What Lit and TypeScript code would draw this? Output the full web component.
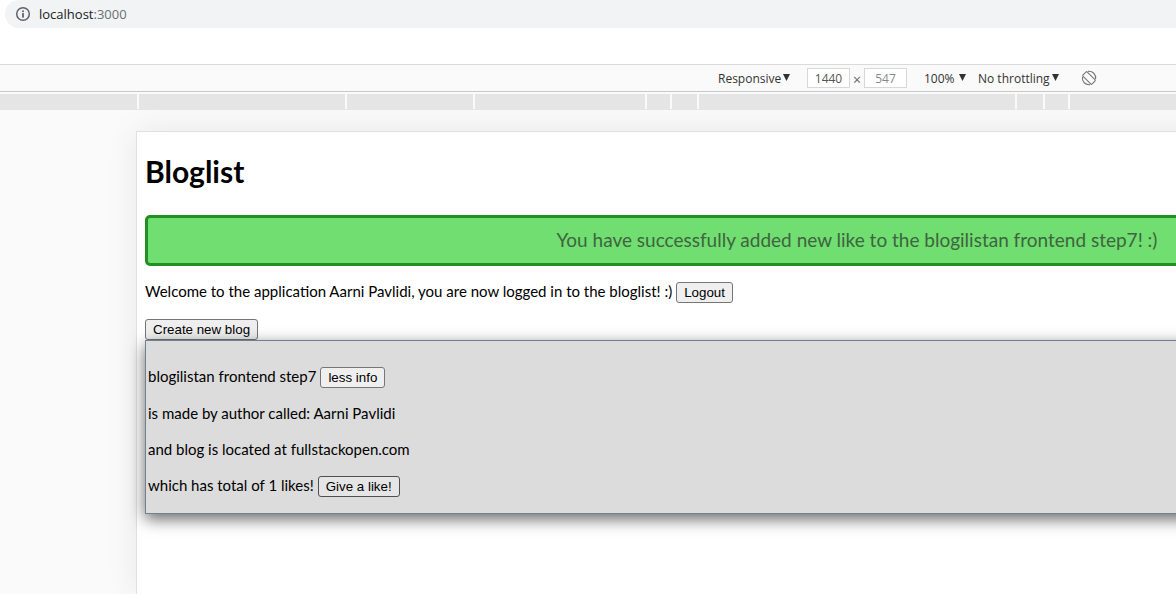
import { LitElement, html, css } from "lit";
import { customElement, property, state } from "lit/decorators.js";

@customElement("address-bar")
class AddressBar extends LitElement {
  static styles = css`
    :host {
      display: block;
      padding-left: 5px;
      background: #fff;
    }
    .field {
      display: flex;
      align-items: center;
      gap: 8px;
      height: 28px;
      padding-left: 10px;
      border-radius: 14px 0 0 14px;
      background: #f1f3f4;
      font: 13px/20px "Open Sans", sans-serif;
      color: #202124;
    }
    .port {
      color: #6b6f73;
    }
    .icon {
      display: block;
      flex: none;
    }
  `;

  render() {
    return html`
      <div class="field">
        <svg class="icon" width="16" height="16" viewBox="0 0 16 16" aria-hidden="true">
          <circle cx="8" cy="8" r="6.3" fill="none" stroke="#5f6368" stroke-width="1.5" />
          <rect x="7.1" y="4.4" width="1.8" height="1.7" fill="#5f6368" />
          <rect x="7.1" y="7.1" width="1.8" height="4.5" fill="#5f6368" />
        </svg>
        <span>localhost<span class="port">:3000</span></span>
      </div>
    `;
  }
}

@customElement("device-toolbar")
class DeviceToolbar extends LitElement {
  static styles = css`
    :host {
      display: flex;
      align-items: center;
      justify-content: flex-end;
      height: 26px;
      padding-right: 79px;
      border-top: 1px solid #d9dadd;
      border-bottom: 1px solid #c8c8c8;
      background: #fafafa;
      font: 12px/16px "Open Sans", sans-serif;
      color: #333;
    }
    select {
      appearance: none;
      margin: 0;
      padding: 2px 8px 0 0;
      border: 0;
      background: url("data:image/svg+xml,%3Csvg xmlns='http://www.w3.org/2000/svg' width='7' height='7'%3E%3Cpath d='M0 0h7L3.5 7z' fill='%23333'/%3E%3C/svg%3E")
        no-repeat right 5px;
      font: inherit;
      color: inherit;
    }
    .device {
      width: 72px;
      margin-right: 17px;
    }
    .zoom {
      width: 42px;
      margin: 0 12px 0 17px;
    }
    .throttle {
      width: 81px;
    }
    input {
      box-sizing: border-box;
      width: 43px;
      height: 20px;
      padding: 0;
      border: 1px solid #d8d8d8;
      background: #fff;
      font: inherit;
      text-align: center;
      color: #555;
    }
    .muted {
      color: #888;
    }
    .times {
      width: 14px;
      padding-top: 3px;
      font-size: 14px;
      text-align: center;
      color: #666;
    }
    .rotate {
      display: block;
      margin-left: 22px;
      padding: 0;
      border: 0;
      background: none;
    }
    .rotate svg {
      display: block;
    }
  `;

  render() {
    return html`
      <select class="device" aria-label="Device"><option>Responsive</option></select>
      <input aria-label="Width" .value=${"1440"} />
      <span class="times">×</span>
      <input class="muted" aria-label="Height" .value=${"547"} />
      <select class="zoom" aria-label="Zoom"><option>100%</option></select>
      <select class="throttle" aria-label="Throttling"><option>No throttling</option></select>
      <button class="rotate" aria-label="Rotate">
        <svg width="16" height="16" viewBox="0 0 16 16" fill="none" stroke="#777">
          <rect x="5" y="1.6" width="6" height="12.8" rx="1" transform="rotate(-45 8 8)" stroke-width="1.1" />
          <path d="M7 1.4a6.6 6.6 0 0 1 7.6 7.6M9 14.6a6.6 6.6 0 0 1-7.6-7.6" stroke-width="1.1" />
        </svg>
      </button>
    `;
  }
}

@customElement("media-bar")
class MediaBar extends LitElement {
  static styles = css`
    :host {
      display: flex;
      gap: 2px;
      height: 15px;
      margin-top: 2px;
      border-bottom: 1px solid #e5e5e5;
      overflow: hidden;
    }
    .range {
      flex: none;
      background: #e5e5e5;
    }
    .rest {
      flex: 1;
      background: #e5e5e5;
    }
  `;

  private ranges = [137, 206, 126, 170, 23, 25, 316, 26, 23];

  render() {
    return html`
      ${this.ranges.map((w) => html`<div class="range" style="width:${w}px"></div>`)}
      <div class="rest"></div>
    `;
  }
}

@customElement("blog-page")
class BlogPage extends LitElement {
  @property({ type: Number }) likes = 1;
  @state() private open = true;

  static styles = css`
    :host {
      display: block;
      padding: 20px 8px;
      font: 15px/18px Lato, sans-serif;
      color: #000;
    }
    h1 {
      margin: 0 0 25px;
      font-size: 30px;
      line-height: 38px;
    }
    p {
      min-height: 20px;
      margin: 0;
    }
    .notice {
      padding: 9px 10px 11px;
      border: 3px solid #228f22;
      border-radius: 5px;
      background: #70de70;
      font-size: 19px;
      line-height: 25px;
      text-align: center;
      color: #3f6440;
    }
    .welcome {
      margin: 16px 0;
    }
    .line {
      display: flex;
      align-items: flex-start;
      gap: 4px;
    }
    button {
      display: block;
      height: 21px;
      padding: 0 7px;
      border: 1px solid #767676;
      border-radius: 3px;
      background: #efefef;
      font-family: "Liberation Sans", Arial, sans-serif;
      line-height: 19px;
      color: #000;
    }
    .like {
      border-color: #4f4f4f;
      background: #e5e5e5;
    }
    .blog {
      display: grid;
      gap: 16px;
      padding: 26px 2px 16px;
      border: 1px solid #708090;
      background: #dcdcdc;
      box-shadow: 0 5px 15px rgba(0, 0, 0, 0.6);
    }
  `;

  render() {
    return html`
      <h1>Bloglist</h1>
      <div class="notice" role="status">
        You have successfully added new like to the blogilistan frontend step7! :)
      </div>
      <p class="line welcome">
        <span>Welcome to the application Aarni Pavlidi, you are now logged in to the bloglist! :)</span>
        <button>Logout</button>
      </p>
      <button>Create new blog</button>
      <article class="blog">
        <p class="line">
          <span>blogilistan frontend step7</span>
          <button @click=${() => (this.open = !this.open)}>${this.open ? "less info" : "more info"}</button>
        </p>
        ${this.open
          ? html`
              <p>is made by author called: Aarni Pavlidi</p>
              <p>and blog is located at fullstackopen.com</p>
              <p class="line">
                <span>which has total of ${this.likes} likes!</span>
                <button class="like" @click=${() => this.likes++}>Give a like!</button>
              </p>
            `
          : ""}
      </article>
    `;
  }
}

@customElement("app-root")
class AppRoot extends LitElement {
  static styles = css`
    :host {
      display: flex;
      flex-direction: column;
      height: 100vh;
      overflow: hidden;
      background: #fafafa;
    }
    .top {
      flex: none;
      padding-bottom: 36px;
      background: #fff;
    }
    device-toolbar,
    media-bar {
      flex: none;
    }
    .stage {
      flex: 1;
      display: flex;
      padding: 21px 0 0 136px;
      overflow: hidden;
    }
    .viewport {
      flex: none;
      border: 1px solid #e0e0e0;
      border-bottom: 0;
      background: #fff;
      box-shadow: 0 0 30px rgba(0, 0, 0, 0.08);
    }
  `;

  @property({ type: Number }) deviceWidth = 1440;

  render() {
    return html`
      <div class="top"><address-bar></address-bar></div>
      <device-toolbar></device-toolbar>
      <media-bar></media-bar>
      <main class="stage">
        <div class="viewport" style="width:${this.deviceWidth}px"><blog-page></blog-page></div>
      </main>
    `;
  }
}
